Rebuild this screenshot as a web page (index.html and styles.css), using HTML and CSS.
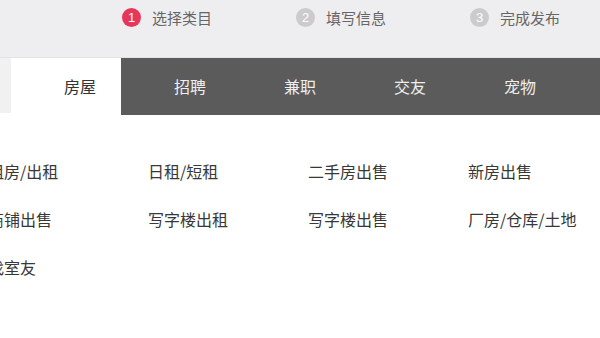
FILE: index.html
```html
<!DOCTYPE html>
<html lang="zh">
<head>
<meta charset="utf-8">
<title>选择类目</title>
<link rel="stylesheet" href="styles.css">
</head>
<body>
<div class="steps">
  <div class="step step-active"><span class="num">1</span><span class="label">选择类目</span></div>
  <div class="step"><span class="num">2</span><span class="label">填写信息</span></div>
  <div class="step"><span class="num">3</span><span class="label">完成发布</span></div>
</div>
<div class="tabbar">
  <div class="edge"></div>
  <div class="tablist">
    <div class="tab tab-active">房屋</div>
    <div class="tab">招聘</div>
    <div class="tab">兼职</div>
    <div class="tab">交友</div>
    <div class="tab">宠物</div>
  </div>
</div>
<div class="cats">
  <div class="cat">租房/出租</div>
  <div class="cat">日租/短租</div>
  <div class="cat">二手房出售</div>
  <div class="cat">新房出售</div>
  <div class="cat">商铺出售</div>
  <div class="cat">写字楼出租</div>
  <div class="cat">写字楼出售</div>
  <div class="cat">厂房/仓库/土地</div>
  <div class="cat">找室友</div>
</div>
</body>
</html>
```
FILE: styles.css
```css
html, body {
  margin: 0;
  padding: 0;
  background: #ffffff;
  overflow: hidden;
}
body {
  font-family: "Noto Sans CJK SC", "Noto Sans", sans-serif;
  width: 600px;
  height: 338px;
}
.steps {
  display: flex;
  align-items: flex-start;
  height: 58px;
  box-sizing: border-box;
  padding: 8px 0 0 122px;
  background: #eeeef0;
  border-bottom: 1px solid #e3e3e6;
}
.step {
  display: flex;
  align-items: center;
  width: 174px;
  flex: none;
}
.num {
  width: 19px;
  height: 19px;
  border-radius: 50%;
  background: #cbcbcd;
  color: #ffffff;
  font-family: "Liberation Sans", sans-serif;
  font-size: 13px;
  line-height: 19px;
  text-align: center;
  margin-right: 11px;
}
.step-active .num {
  background: #e6365a;
}
.label {
  font-size: 15px;
  line-height: 19px;
  color: #666666;
}
.tabbar {
  display: flex;
  height: 57px;
}
.edge {
  width: 11px;
  height: 55px;
  background: #f1f1f1;
  flex: none;
}
.tablist {
  flex: 1;
  display: flex;
  background: #5b5b5b;
}
.tab {
  width: 110px;
  box-sizing: border-box;
  padding-left: 53px;
  line-height: 57px;
  font-size: 16px;
  color: #eeeeee;
  flex: none;
}
.tab-active {
  background: #ffffff;
  color: #333333;
}
.cats {
  display: grid;
  grid-template-columns: repeat(4, 160px);
  grid-auto-rows: 48px;
  margin: 32px 0 0 -12px;
}
.cat {
  font-size: 16px;
  line-height: 48px;
  color: #383838;
  white-space: nowrap;
}
```
